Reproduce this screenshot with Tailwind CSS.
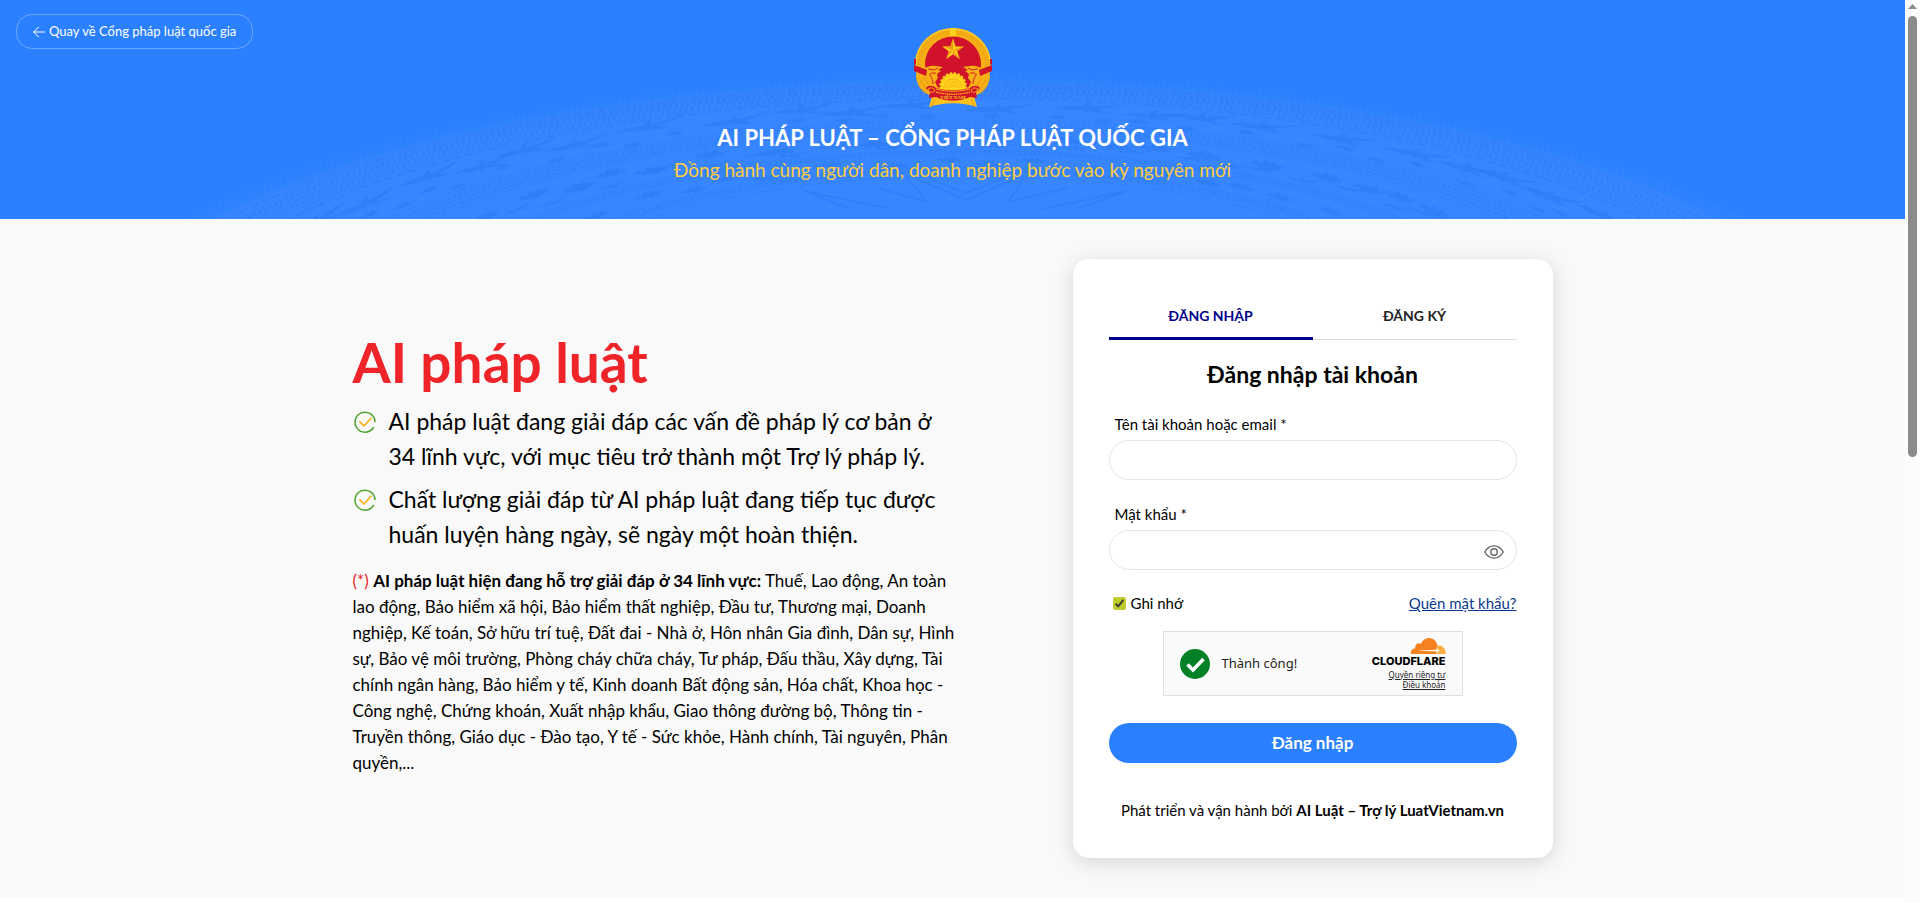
<!DOCTYPE html>
<html lang="vi">

<head>
  <meta charset="UTF-8" />
  <meta name="viewport" content="width=device-width, initial-scale=1.0" />
  <title>Đăng nhập - AI Pháp luật</title>
  <script src="https://cdn.jsdelivr.net/npm/@tailwindcss/browser@4"></script>
</head>

<body class="flex min-h-screen bg-white text-black font-[Lato,'Noto_Sans',sans-serif]">

  <div class="flex-1 min-w-0">
    <!-- header -->
    <header class="relative overflow-hidden bg-[#2a80ff] h-[219px]">
      <svg class="absolute inset-0 w-full h-full" viewBox="0 0 1905 219" preserveAspectRatio="xMidYMin slice" aria-hidden="true">
        <g id="drum"></g>
      </svg>

      <a href="#" class="absolute left-4 top-3.5 flex items-center gap-1 h-[35px] px-4 rounded-2xl border border-white/30 text-white text-[13px]">
        <svg class="w-3 h-3" viewBox="0 0 12 12" fill="none" stroke="currentColor" stroke-linecap="round" stroke-linejoin="round"><path d="M11.500 6H.8M5.500 1.200.8 6l4.700 4.800" /></svg>
        Quay về Cổng pháp luật quốc gia
      </a>

      <div class="relative flex flex-col items-center pt-7 text-center">
        <svg class="w-20 h-20" viewBox="0 0 80 80" role="img" aria-label="Quốc huy">
          <ellipse cx="40" cy="36" rx="38" ry="36" fill="#f7b016" />
          <ellipse cx="40" cy="36" rx="34" ry="32" fill="none" stroke="#dd8d12" stroke-width="5" stroke-dasharray="1 1.500" opacity=".4" />
          <ellipse cx="40" cy="36" rx="37" ry="35" fill="none" stroke="#ffc928" stroke-width="1.500" />
          <rect x="37" y="0" width="6" height="9" fill="#ffd21c" />
          <ellipse cx="40" cy="36" rx="28" ry="27.500" fill="#d0122b" />
          <path d="M40 10.500l2.600 7.900h8.200l-6.600 4.800 2.500 7.900L40 26.300l-6.700 4.800 2.500-7.900-6.600-4.800h8.200z" fill="#ffd21c" />
          <path d="M40 10.500v11.500l-2.600-3.600zM50.800 18.400 40 22l4.200 1.200zM46.700 31.100 40 22v4.300zM33.300 31.100 40 22l-4.200 1.200zM29.200 18.400 40 22l-2.600-3.600z" fill="#f09a18" />
          <!-- wheat ears -->
          <path d="M11 40c5-1 6-3 12-2 3 0 5 1 7 1l-5 3 3 1-4 3 1 4-3 4 4 8-10 5C8 63 3 55 3 47z" fill="#f7b016" />
          <path d="M69 40c-5-1-6-3-12-2-3 0-5 1-7 1l5 3-3 1 4 3-1 4 3 4-4 8 10 5c8-4 13-12 13-20z" fill="#f7b016" />
          <path d="M15 41l6 1 4-2M16 47l3-2 4 0M17 47c2 3 3 6 3 9M65 41l-6 1-4-2M64 47l-3-2-4 0M63 47c-2 3-3 6-3 9" fill="none" stroke="#d0122b" stroke-width=".9" />
          <path d="M7 52l8 12M5 57l7 9M11 50l7 10M73 52l-8 12M75 57l-7 9M69 50l-7 10" fill="none" stroke="#de8d13" stroke-width="1.200" stroke-dasharray="1 1" />
          <!-- side bands -->
          <path d="M1 37l13 5-1 6L1 43zM79 37l-13 5 1 6 12-5z" fill="#d0122b" />
          <path d="M1 31l2 0v6l-2-1zM79 31l-2 0v6l2-1z" fill="#d0122b" />
          <!-- cogwheel -->
          <circle cx="40" cy="58" r="12.500" fill="#ffd21c" />
          <circle cx="40" cy="58" r="13" fill="none" stroke="#ffd21c" stroke-width="1.600" stroke-dasharray="2.500 1.600" />
          <path d="M31 60a9 9 0 0 1 18 0M34 60a6 6 0 0 1 12 0M37 60a3 3 0 0 1 6 0" fill="none" stroke="#f3ac1a" stroke-width=".8" />
          <!-- foot and ribbon -->
          <path d="M20 65c13 5 27 5 40 0l4 14c-15-5-33-5-48 0z" fill="#ffc21a" />
          <path d="M18 79l4-8M62 79l-4-8" stroke="#e99b15" />
          <path d="M13 60c2-3 7-3 10 0 11 3 23 3 34 0 3-3 8-3 10 0l-4 4 1 6-7-1c-11 5-23 5-34 0l-7 1 1-6z" fill="#d0122b" />
          <path d="M15 61c3-2 6-1 7 2-2 2-5 2-7-2zM65 61c-3-2-6-1-7 2 2 2 5 2 7-2zM23 61c11 3 23 3 34 0" fill="none" stroke="#f7b016" />
          <path d="M23 64c11 3 23 3 34 0" fill="none" stroke="#f7b016" stroke-width="1.500" stroke-dasharray="1.500 .7" />
          <text x="40" y="71" text-anchor="middle" font-family="Liberation Serif, serif" font-size="5" font-weight="700" fill="#ffd21c">VIỆT NAM</text>
        </svg>
        <h1 class="mt-3 text-[22px] leading-9 font-bold text-white">AI PHÁP LUẬT – CỔNG PHÁP LUẬT QUỐC GIA</h1>
        <p class="text-[19px] leading-7 text-[#ffcb3a]">Đồng hành cùng người dân, doanh nghiệp bước vào kỷ nguyên mới</p>
      </div>
    </header>

    <!-- content -->
    <main class="bg-[#f9f9f9] pt-10 pb-10">
      <div class="max-w-[1200px] mx-auto flex items-center justify-between">

        <section class="w-[640px] pb-2.5">
          <h2 class="text-[55px] leading-[60px] font-bold text-[#ee2428]">AI pháp luật</h2>
          <ul class="mt-3 flex flex-col gap-2 text-[23px] leading-[35px]">
            <li class="flex gap-3">
              <svg class="w-6 h-6 mt-1.5 shrink-0" viewBox="0 0 24 24" fill="none" stroke-linecap="round" stroke-linejoin="round"><path d="M22 11.500A10 10 0 1 0 20.500 17.500" stroke="#4ba32c" stroke-width="1.500" /><path d="M6.800 11.800l4.200 4.200 7-7.800" stroke="#fbb116" stroke-width="1.700" /></svg>
              <span>AI pháp luật đang giải đáp các vấn đề pháp lý cơ bản ở<br>34 lĩnh vực, với mục tiêu trở thành một Trợ lý pháp lý.</span>
            </li>
            <li class="flex gap-3">
              <svg class="w-6 h-6 mt-1.5 shrink-0" viewBox="0 0 24 24" fill="none" stroke-linecap="round" stroke-linejoin="round"><path d="M22 11.500A10 10 0 1 0 20.500 17.500" stroke="#4ba32c" stroke-width="1.500" /><path d="M6.800 11.800l4.200 4.200 7-7.800" stroke="#fbb116" stroke-width="1.700" /></svg>
              <span>Chất lượng giải đáp từ AI pháp luật đang tiếp tục được<br>huấn luyện hàng ngày, sẽ ngày một hoàn thiện.</span>
            </li>
          </ul>
          <p class="mt-4 text-[17px] leading-[26px]">
            <span class="text-[#ee2428]">(*)</span> <strong>AI pháp luật hiện đang hỗ trợ giải đáp ở 34 lĩnh vực:</strong> Thuế, Lao động, An toàn<br>
            lao động, Bảo hiểm xã hội, Bảo hiểm thất nghiệp, Đầu tư, Thương mại, Doanh<br>
            nghiệp, Kế toán, Sở hữu trí tuệ, Đất đai - Nhà ở, Hôn nhân Gia đình, Dân sự, Hình<br>
            sự, Bảo vệ môi trường, Phòng cháy chữa cháy, Tư pháp, Đấu thầu, Xây dựng, Tài<br>
            chính ngân hàng, Bảo hiểm y tế, Kinh doanh Bất động sản, Hóa chất, Khoa học -<br>
            Công nghệ, Chứng khoán, Xuất nhập khẩu, Giao thông đường bộ, Thông tin -<br>
            Truyền thông, Giáo dục - Đào tạo, Y tế - Sức khỏe, Hành chính, Tài nguyên, Phân<br>
            quyền,...
          </p>
        </section>

        <section class="w-[480px] px-9 pt-9 pb-9 bg-white rounded-2xl shadow-[0_4px_20px_rgba(0,0,0,0.15)]">
          <div class="flex border-b border-[#ddd] text-sm font-bold">
            <button type="button" class="flex-1 h-[45px] -mb-px border-b-3 border-[#00008b] text-[#00008b]">ĐĂNG NHẬP</button>
            <button type="button" class="flex-1 h-[45px] -mb-px border-b-3 border-transparent text-[#222]">ĐĂNG KÝ</button>
          </div>

          <form class="flex flex-col text-[15px]">
            <h3 class="mt-4 text-[23px] leading-9 font-bold text-center">Đăng nhập tài khoản</h3>

            <label for="username" class="mt-5 ml-1.5 leading-6">Tên tài khoản hoặc email *</label>
            <input id="username" type="text" class="mt-1 h-10 px-4 rounded-full border border-[#e5e5e5]">

            <label for="password" class="mt-[22px] ml-1.5 leading-6">Mật khẩu *</label>
            <div class="mt-1 flex items-center h-10 pl-4 pr-3 rounded-full border border-[#e5e5e5]">
              <input id="password" type="password" class="flex-1 min-w-0 outline-none">
              <button type="button" aria-label="Hiện mật khẩu">
                <svg class="w-5 h-5 mt-1 text-[#666]" viewBox="0 0 20 20" fill="none" stroke="currentColor" stroke-width="1.400"><path d="M.8 10C3 6 6.200 3.900 10 3.900s7 2.100 9.200 6.100c-2.200 4-5.400 6.100-9.200 6.100S3 14 .8 10z" /><circle cx="10" cy="10" r="3.200" /></svg>
              </button>
            </div>

            <div class="mt-[21px] flex items-center justify-between leading-6">
              <label for="remember" class="ml-1 flex items-center gap-[5px]">
                <span class="relative flex w-[13px] h-[13px]">
                  <input id="remember" type="checkbox" checked class="appearance-none w-[13px] h-[13px] rounded-xs bg-[#c0cb2c]">
                  <svg class="absolute inset-0 pointer-events-none" viewBox="0 0 13 13" fill="none" stroke="#3d4033" stroke-width="2"><path d="M2.500 6.600 5.200 9.300 10.300 3" /></svg>
                </span>
                Ghi nhớ
              </label>
              <a href="#" class="underline text-[#0a3a8f]">Quên mật khẩu?</a>
            </div>

            <div class="mt-4 self-center flex items-center w-[300px] h-[65px] px-4 bg-[#fafafa] border border-[#e0e0e0] text-[#232323] font-['Noto_Sans',sans-serif]">
              <svg class="w-[30px] h-[30px]" viewBox="0 0 30 30"><circle cx="15" cy="15" r="15" fill="#038127" /><path d="M7.500 15.500l5.500 5.500 10.500-11" fill="none" stroke="#fff" stroke-width="3.500" /></svg>
              <span class="ml-3 text-[13px]">Thành công!</span>
              <div class="ml-auto flex flex-col items-end text-[8px] leading-[10px]">
                <svg class="w-9 h-4" viewBox="0 0 36 16" role="img" aria-label="Cloudflare">
                  <path d="M1 16c-.8-3.200 1.200-5.700 4.300-5.800C4.600 6.600 8 4 11 5.800 12.400 2.200 15.500 0 19 0c4.300 0 7.500 3 8.200 7.200C28 10 26.500 13 26 16z" fill="#f6821f" />
                  <path d="M25.500 16c1-3 1.800-5.600 2-8.800 5-.2 8.500 3.300 8.300 8.800z" fill="#fbad41" />
                  <path d="M10 12.400l16-.7 1.200-2 1 2.200 2.200.6-2.200.8-1 2-1.400-2.100L10 13z" fill="#fff" />
                </svg>
                <span class="mt-0.5 text-[11px] leading-[10px] font-extrabold text-black font-[Inter,sans-serif]">CLOUDFLARE</span>
                <a href="#" class="mt-1 underline">Quyền riêng tư</a>
                <a href="#" class="underline">Điều khoản</a>
              </div>
            </div>

            <button type="submit" class="mt-[27px] h-10 rounded-full bg-[#2a80ff] text-white text-[17px] font-bold">Đăng nhập</button>
          </form>

          <p class="mt-[35px] text-[15px] leading-6 text-center">Phát triển và vận hành bởi <strong>AI Luật – Trợ lý LuatVietnam.vn</strong></p>
        </section>
      </div>
    </main>
  </div>

  <!-- scroll track -->
  <div class="w-[15px] bg-[#fcfcfc] flex flex-col items-center" aria-hidden="true">
    <svg class="mt-1 w-[9px] h-[5px]" viewBox="0 0 9 5"><path d="M4.500 0 9 5H0z" fill="#8b8b8b" /></svg>
    <div class="mt-[7px] w-[9px] h-[441px] rounded-full bg-[#8b8b8b]"></div>
  </div>

  <script>
    const drum = document.getElementById("drum");
    const CX = 966;

    // t = 1 is the rim, smaller values are the inner rings
    function ring(t) {
      return { cy: 378 - 107 * (1 - t), rx: 915 * t, ry: 302 * t };
    }

    function ellipse(t, attrs) {
      const r = ring(t);
      return `<ellipse cx="${CX}" cy="${r.cy}" rx="${r.rx}" ry="${r.ry}" ${attrs} />`;
    }

    let out = ellipse(1, 'fill="#2f83ff"') + ellipse(0.97, 'fill="#3886ff"');

    // toothed bands and thin lines
    [[0.99, 4, "2 4"], [0.955, 2, "9 3"], [0.935, 4, "3 3"], [0.91, 4, "2 4"], [0.885, 2, "8 4"],
     [0.76, 3, "2 4"], [0.735, 2, "6 3"], [0.61, 3, "2 3"], [0.52, 2, "4 3"]].forEach(b => {
      out += ellipse(b[0], `fill="none" stroke="#2a7af4" stroke-opacity=".5" stroke-width="${b[1]}" stroke-dasharray="${b[2]}"`);
    });
    [0.965, 0.945, 0.922, 0.898, 0.775, 0.748, 0.722, 0.62, 0.6, 0.53, 0.51, 0.49].forEach(t => {
      out += ellipse(t, 'fill="none" stroke="#2c7bf6" stroke-opacity=".5"');
    });

    // flying birds and figures between the bands
    const bird = "M-34 3C-24-1-14-3-6-1L-2-7 4-9 1-2 14-4 36-9 24-2 10 2 16 6 26 7 12 8 2 5-6 9-3 4-14 6-22 4z";
    const figure = "M-18 3l5-5 6 2 3-6 5 4 6-3 2 5 9-1-6 4 4 3-9-1-4 4-6-4-6 3-1-4z";
    [[0.845, 34, bird, 1], [0.8, 44, figure, 0.6], [0.68, 34, figure, 1], [0.65, 38, bird, 0.5], [0.565, 30, figure, 0.8]].forEach(row => {
      const r = ring(row[0]);
      for (let i = 0; i < row[1]; i++) {
        const a = Math.PI + (i + 0.5 + 0.25 * Math.sin(i * 5)) * Math.PI / row[1];
        const x = CX + r.rx * Math.cos(a);
        const y = r.cy + r.ry * Math.sin(a) + 3 * Math.sin(i * 3);
        const deg = Math.atan2(r.ry * Math.cos(a), -r.rx * Math.sin(a)) * 180 / Math.PI;
        if (y < 230) {
          out += `<path d="${row[2]}" fill="#2a7af4" fill-opacity=".55" transform="translate(${x} ${y}) rotate(${deg}) scale(${row[3]} ${row[3] * 0.65})" />`;
        }
      }
    });

    // star rays in the middle
    out += '<path d="M915 178l51 22 51-22M928 178l38 15 38-15M907 178l20 24-50-14M1024 178l-16 24 60-14M890 209l-85-18 45 18M1042 209l85-18-50 18" fill="none" stroke="#2a79f4" stroke-opacity=".6" stroke-width="1.5" />';

    drum.innerHTML = out;
  </script>
</body>

</html>
